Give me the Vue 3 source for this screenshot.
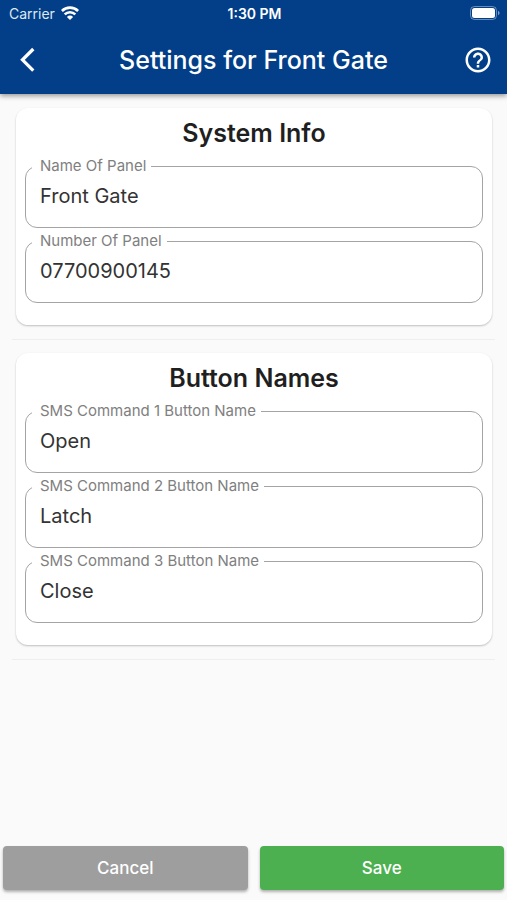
<script setup>
import { reactive } from 'vue'

const groups = reactive([
  {
    title: 'System Info',
    fields: [
      { id: 'panel-name', label: 'Name Of Panel', value: 'Front Gate', type: 'text' },
      { id: 'panel-number', label: 'Number Of Panel', value: '07700900145', type: 'tel' },
    ],
  },
  {
    title: 'Button Names',
    fields: [
      { id: 'command-1', label: 'SMS Command 1 Button Name', value: 'Open', type: 'text' },
      { id: 'command-2', label: 'SMS Command 2 Button Name', value: 'Latch', type: 'text' },
      { id: 'command-3', label: 'SMS Command 3 Button Name', value: 'Close', type: 'text' },
    ],
  },
])
</script>

<template>
  <div class="screen">
    <header class="top">
      <div class="status">
        <div class="carrier">
          <span>Carrier</span>
          <svg class="wifi" viewBox="0 0 18 14" width="18" height="14" aria-hidden="true">
            <g fill="none" stroke="#fff" stroke-width="2.6">
              <path d="M0.900 5A11.500 11.500 0 0 1 17.100 5" />
              <path d="M3.700 8.400A7.500 7.500 0 0 1 14.300 8.400" />
            </g>
            <path d="M9 14 5.900 10.900A4.400 4.400 0 0 1 12.100 10.900Z" fill="#fff" />
          </svg>
        </div>
        <span class="time">1:30 PM</span>
        <svg class="battery" viewBox="0 0 30 14" width="30" height="14" aria-hidden="true">
          <rect x="0.5" y="0.5" width="26" height="13" rx="4" fill="none" stroke="#fff" stroke-opacity=".4" />
          <rect x="2" y="2" width="23" height="10" rx="2.5" fill="#fff" />
          <path d="M28 4.800Q29.600 5.600 29.600 7T28 9.200Z" fill="#fff" fill-opacity=".5" />
        </svg>
      </div>
      <nav class="bar">
        <button class="icon" type="button" aria-label="Back">
          <svg viewBox="0 0 28 28" width="28" height="28" aria-hidden="true">
            <path d="M19.300 3 8.500 13.800 19.300 24.600" fill="none" stroke="#fff" stroke-width="3.300" />
          </svg>
        </button>
        <h1>Settings for Front Gate</h1>
        <button class="icon" type="button" aria-label="Help">
          <svg viewBox="0 0 24 24" width="30" height="30" aria-hidden="true">
            <path
              fill="#fff"
              d="M11 18h2v-2h-2v2zm1-16C6.480 2 2 6.480 2 12s4.480 10 10 10 10-4.480 10-10S17.520 2 12 2zm0 18c-4.410 0-8-3.590-8-8s3.590-8 8-8 8 3.590 8 8-3.590 8-8 8zm0-14c-2.210 0-4 1.790-4 4h2c0-1.100.9-2 2-2s2 .9 2 2c0 2-3 1.750-3 5h2c0-2.250 3-2.500 3-5 0-2.210-1.790-4-4-4z"
            />
          </svg>
        </button>
      </nav>
    </header>

    <main class="content">
      <template v-for="group in groups" :key="group.title">
        <section class="card">
          <h2>{{ group.title }}</h2>
          <div class="fields">
            <fieldset v-for="field in group.fields" :key="field.id" class="field">
              <legend><label :for="field.id">{{ field.label }}</label></legend>
              <input :id="field.id" v-model="field.value" :type="field.type" />
            </fieldset>
          </div>
        </section>
        <hr />
      </template>
    </main>

    <footer class="actions">
      <button class="cancel" type="button">Cancel</button>
      <button class="save" type="button">Save</button>
    </footer>
  </div>
</template>

<style>
body {
  margin: 0;
  background: #fafafa;
}
</style>

<style scoped>
.screen {
  display: flex;
  flex-direction: column;
  min-height: 100vh;
  box-sizing: border-box;
  background: #fafafa;
  color: #1f1f1f;
  font-family: Inter, "Liberation Sans", sans-serif;
}

button,
input {
  font-family: inherit;
}

.top {
  background: #023f88;
  color: #fff;
  box-shadow: 0 2px 5px rgba(0, 0, 0, 0.4);
}

.status {
  display: grid;
  grid-template-columns: 1fr auto 1fr;
  align-items: center;
  height: 26px;
  padding: 0 7px 0 9px;
  font-size: 14px;
}

.carrier {
  display: flex;
  align-items: center;
  gap: 6px;
  color: #dfe8f2;
}

.time {
  font-weight: 600;
}

.battery {
  justify-self: end;
}

.bar {
  display: grid;
  grid-template-columns: 30px 1fr 30px;
  align-items: center;
  height: 68px;
  padding: 0 14px;
}

h1 {
  margin: 0;
  font-size: 25px;
  line-height: 30px;
  font-weight: 500;
  text-align: center;
}

.icon {
  display: flex;
  padding: 0;
  border: 0;
  background: none;
}

.content {
  flex: 1;
  padding: 14px 12px 0;
}

.card {
  margin: 0 3px 0 4px;
  padding: 10px 9px 22px;
  border-radius: 12px;
  background: #fff;
  box-shadow: 0 1px 2px rgba(0, 0, 0, 0.24);
}

h2 {
  margin: 0 0 10px;
  font-size: 25px;
  line-height: 30px;
  font-weight: 600;
  text-align: center;
}

.fields {
  display: grid;
  gap: 5px;
}

.field {
  min-width: 0;
  margin: 0;
  padding: 0 14px;
  border: 1px solid #a4a4a4;
  border-radius: 12px;
}

legend {
  margin-left: -8px;
  padding: 0 5px 0 8px;
  font-size: 15px;
  line-height: 16px;
  color: #808080;
}

label {
  display: block;
}

input {
  display: block;
  box-sizing: border-box;
  width: 100%;
  height: 53px;
  padding: 0 0 9px;
  border: 0;
  outline: 0;
  background: transparent;
  color: #333;
  font-size: 20px;
}

hr {
  margin: 14px 0 13px;
  border: 0;
  border-top: 1px solid #eee;
}

.actions {
  display: grid;
  grid-template-columns: 1fr 1fr;
  gap: 12px;
  padding: 0 3px 10px;
}

.actions button {
  height: 44px;
  padding: 0;
  border: 0;
  border-radius: 4px;
  color: #fff;
  font-size: 17px;
  font-weight: 500;
  box-shadow: 0 2px 3px rgba(0, 0, 0, 0.3);
}

.actions .cancel {
  background: #9e9e9e;
}

.actions .save {
  background: #4caf50;
}
</style>
